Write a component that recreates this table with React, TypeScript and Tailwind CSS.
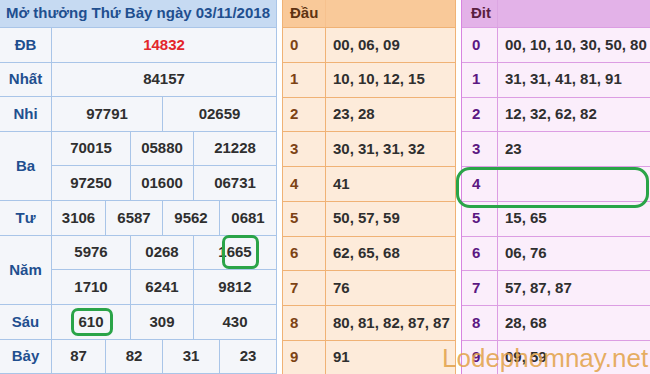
import React from "react";

const F = "font-['Liberation_Sans',Arial,sans-serif] font-bold text-[15px]";

const L = "border-[#a9c5e8]";

function LRow({ children, label }: { children: React.ReactNode; label?: string }) {
  return (
    <div className={`flex h-[34.75px] border-b ${L}`}>
      {label !== undefined && (
        <div className={`w-[52px] shrink-0 border-r ${L} flex items-center justify-center text-[#1f4f8f]`}>{label}</div>
      )}
      {children}
    </div>
  );
}

function LCell({ w, children, red, last }: { w?: string; children: React.ReactNode; red?: boolean; last?: boolean }) {
  return (
    <div
      className={`${w ?? "flex-1"} ${last ? "" : "border-r"} ${L} shrink-0 flex items-center justify-center ${red ? "text-[#e3262b]" : "text-[#2f2f2f]"}`}
    >
      {children}
    </div>
  );
}

function Three({ a, b, c }: { a: string; b: string; c: string }) {
  return (
    <div className={`flex h-[34.75px] border-b ${L}`}>
      <LCell w="w-[79px]">{a}</LCell>
      <LCell w="w-[63px]">{b}</LCell>
      <LCell last>{c}</LCell>
    </div>
  );
}

function Four({ a, b, c, d }: { a: string; b: string; c: string; d: string }) {
  return (
    <>
      <LCell w="w-[54px]">{a}</LCell>
      <LCell w="w-[57px]">{b}</LCell>
      <LCell w="w-[57px]">{c}</LCell>
      <LCell last>{d}</LCell>
    </>
  );
}

function LeftTable() {
  return (
    <div className={`w-[277px] shrink-0 border-r ${L} bg-[#f4f6fa] flex flex-col ${F}`}>
      <div className={`h-[28px] shrink-0 border-b ${L} bg-[#c6daf2] flex items-center justify-center text-[#1f4f8f]`}>
        Mở thưởng Thứ Bảy ngày 03/11/2018
      </div>
      <LRow label="ĐB">
        <LCell red last>14832</LCell>
      </LRow>
      <LRow label="Nhất">
        <LCell last>84157</LCell>
      </LRow>
      <LRow label="Nhi">
        <LCell w="w-[111px]">97791</LCell>
        <LCell last>02659</LCell>
      </LRow>
      <div className={`flex border-b ${L}`}>
        <div className={`w-[52px] shrink-0 border-r ${L} flex items-center justify-center text-[#1f4f8f]`}>Ba</div>
        <div className="flex-1 flex flex-col">
          <Three a="70015" b="05880" c="21228" />
          <div className="flex h-[33.75px]">
            <LCell w="w-[79px]">97250</LCell>
            <LCell w="w-[63px]">01600</LCell>
            <LCell last>06731</LCell>
          </div>
        </div>
      </div>
      <LRow label="Tư">
        <Four a="3106" b="6587" c="9562" d="0681" />
      </LRow>
      <div className={`flex border-b ${L}`}>
        <div className={`w-[52px] shrink-0 border-r ${L} flex items-center justify-center text-[#1f4f8f]`}>Năm</div>
        <div className="flex-1 flex flex-col">
          <Three a="5976" b="0268" c="1665" />
          <div className="flex h-[33.75px]">
            <LCell w="w-[79px]">1710</LCell>
            <LCell w="w-[63px]">6241</LCell>
            <LCell last>9812</LCell>
          </div>
        </div>
      </div>
      <LRow label="Sáu">
        <LCell w="w-[79px]">610</LCell>
        <LCell w="w-[63px]">309</LCell>
        <LCell last>430</LCell>
      </LRow>
      <LRow label="Bảy">
        <Four a="87" b="82" c="31" d="23" />
      </LRow>
    </div>
  );
}

const dau = [
  "00, 06, 09",
  "10, 10, 12, 15",
  "23, 28",
  "30, 31, 31, 32",
  "41",
  "50, 57, 59",
  "62, 65, 68",
  "76",
  "80, 81, 82, 87, 87",
  "91",
];

const dit = [
  "00, 10, 10, 30, 50, 80",
  "31, 31, 41, 81, 91",
  "12, 32, 62, 82",
  "23",
  "",
  "15, 65",
  "06, 76",
  "57, 87, 87",
  "28, 68",
  "09, 59",
];

function MidTable() {
  return (
    <div className={`ml-[5px] w-[174px] shrink-0 border-x border-[#f0b275] bg-[#fdebda] flex flex-col ${F}`}>
      <div className="h-[28px] shrink-0 border-b border-[#f0b275] bg-[#f9c999] flex">
        <div className="w-[43px] shrink-0 border-r border-[#f6c18e] flex items-center pl-[7px] text-[#5e3312]">Đầu</div>
        <div className="flex-1" />
      </div>
      {dau.map((v, i) => (
        <div key={i} className="flex h-[34.75px] shrink-0 border-b border-[#f0b275]">
          <div className="w-[43px] shrink-0 border-r border-[#f0b275] flex items-center pl-[7px] text-[#7c4214]">{i}</div>
          <div className="flex-1 flex items-center pl-[7px] text-[#2f2f2f] whitespace-nowrap">{v}</div>
        </div>
      ))}
    </div>
  );
}

function RightTable() {
  return (
    <div className={`ml-[5px] flex-1 border-l border-[#d884e0] bg-[#fbeefb] flex flex-col ${F}`}>
      <div className="h-[28px] shrink-0 border-b border-[#dc9de3] bg-[#e3b2e8] flex">
        <div className="w-[36px] shrink-0 border-r border-[#dca6e2] flex items-center pl-[9px] text-[#5a1f40]">Đit</div>
        <div className="flex-1" />
      </div>
      {dit.map((v, i) => (
        <div key={i} className="flex h-[34.75px] shrink-0 border-b border-[#dc9de3]">
          <div className="w-[36px] shrink-0 border-r border-[#dc9de3] flex items-center pl-[10px] text-[#5b1782]">{i}</div>
          <div className="flex-1 flex items-center pl-[7px] text-[#2f2f2f] whitespace-nowrap">{v}</div>
        </div>
      ))}
    </div>
  );
}

export default function App() {
  return (
    <div className="relative w-[650px] h-[374px] overflow-hidden bg-white flex">
      <LeftTable />
      <MidTable />
      <RightTable />
      <div className="absolute left-[222px] top-[235px] w-[37px] h-[34px] border-[3px] border-[#2aa448] rounded-[7px]" />
      <div className="absolute left-[71px] top-[308px] w-[42px] h-[28px] border-[3px] border-[#2aa448] rounded-[7px]" />
      <div className="absolute left-[456px] top-[167px] w-[193px] h-[41px] border-[3px] border-[#2aa448] rounded-[14px]" />
      <div className="absolute left-[442px] top-[345px] font-['Liberation_Sans',Arial,sans-serif] text-[26px] leading-[26px] text-[#e2a146]/85 whitespace-nowrap">
        Lodephomnay.net
      </div>
    </div>
  );
}
